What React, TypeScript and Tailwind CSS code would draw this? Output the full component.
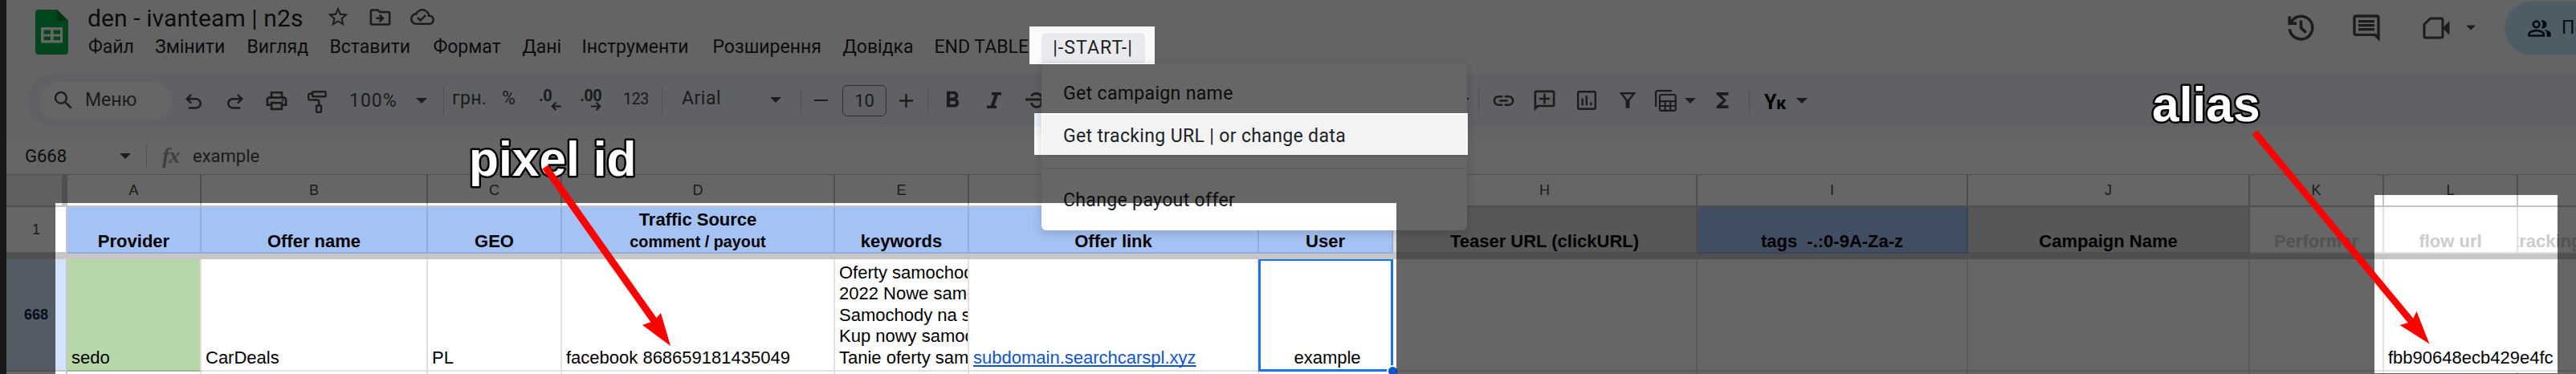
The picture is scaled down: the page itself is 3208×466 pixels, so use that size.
import React from 'react';
import {
    MdFormatBold,
    MdFunctions,
    MdLink,
    MdOutlineAddComment,
    MdOutlineCloudDone,
    MdOutlineComment,
    MdOutlineDriveFileMove,
    MdOutlinePeopleAlt,
    MdOutlinePrint,
    MdSearch,
    MdStarBorder,
} from 'react-icons/md';

interface Column {
    letter: string;
    width: string;
    title: React.ReactNode;
    head: string;
    cell?: React.ReactNode;
    cellClass?: string;
}

const BLUE = 'bg-[#a4c2f4] border-[#92abd8] text-black';
const GREY = 'bg-[#d9d9d9] border-[#c2c2c2] text-black';
const PLAIN = 'bg-white border-[#e1e1e1] text-[#cccccc]';

const keywords = [
    'Oferty samochodowe',
    '2022 Nowe samochody',
    'Samochody na sprzedaż',
    'Kup nowy samochód',
    'Tanie oferty samochodowe',
];

const columns: Column[] = [
    { letter: 'A', width: 'w-[167px]', title: 'Provider', head: BLUE, cell: 'sedo', cellClass: 'bg-[#b6d7a8] border-r-[#e1e1e1] border-b-[#9fbd93]' },
    { letter: 'B', width: 'w-[282px]', title: 'Offer name', head: BLUE, cell: 'CarDeals' },
    { letter: 'C', width: 'w-[167px]', title: 'GEO', head: BLUE, cell: 'PL' },
    {
        letter: 'D',
        width: 'w-[340px]',
        title: <>Traffic Source<br /><span className="text-[19.8px]">comment / payout</span></>,
        head: BLUE,
        cell: 'facebook 868659181435049',
    },
    {
        letter: 'E',
        width: 'w-[167px]',
        title: 'keywords',
        head: BLUE,
        cell: <div className="w-[162px] overflow-hidden">{keywords.map(k => <div key={k}>{k}</div>)}</div>,
    },
    {
        letter: 'F',
        width: 'w-[361px]',
        title: 'Offer link',
        head: BLUE,
        cell: <span className="text-[#1155cc] underline decoration-2 underline-offset-[2px] [text-decoration-skip-ink:none]">subdomain.searchcarspl.xyz</span>,
    },
    { letter: 'G', width: 'w-[167px]', title: 'User', head: BLUE, cell: 'example', cellClass: 'justify-center' },
    { letter: 'H', width: 'w-[379px]', title: 'Teaser URL (clickURL)', head: GREY },
    { letter: 'I', width: 'w-[337px]', title: 'tags  -.:0-9A-Za-z', head: BLUE },
    { letter: 'J', width: 'w-[351px]', title: 'Campaign Name', head: GREY },
    { letter: 'K', width: 'w-[167px]', title: 'Performer', head: PLAIN },
    { letter: 'L', width: 'w-[167px]', title: 'flow url', head: PLAIN, cell: 'fbb90648ecb429e4fc', cellClass: 'border-r-transparent' },
    { letter: 'M', width: 'w-[184px]', title: 'tracking campaign', head: PLAIN },
];

const menuItems = [
    { label: 'Файл', width: 'w-[83px]' },
    { label: 'Змінити', width: 'w-[114.5px]' },
    { label: 'Вигляд', width: 'w-[103px]' },
    { label: 'Вставити', width: 'w-[129px]' },
    { label: 'Формат', width: 'w-[111px]' },
    { label: 'Дані', width: 'w-[74px]' },
    { label: 'Інструменти', width: 'w-[163px]' },
    { label: 'Розширення', width: 'w-[162px]' },
    { label: 'Довідка', width: 'w-[114px]' },
    { label: 'END TABLE', width: 'w-[133px]' },
];

const SheetsLogo: React.FC = () => (
    <svg width="41" height="56" viewBox="0 0 41 56" className="shrink-0">
        <path d="M4 0h23l14 14v38a4 4 0 0 1-4 4H4a4 4 0 0 1-4-4V4a4 4 0 0 1 4-4z" fill="#00ac47" />
        <path d="M27 0l14 14H27z" fill="#00832d" />
        <path fillRule="evenodd" fill="#fff" d="M7 22h27v19.500H7zM10.500 25.500v5h8.500v-5zM22.500 25.500v5H31v-5zM10.500 33.500v4.500h8.500v-4.500zM22.500 33.500v4.500H31v-4.500z" />
    </svg>
);

const UndoIcon: React.FC<{ className?: string }> = ({ className }) => (
    <svg width="30" height="30" viewBox="0 0 24 24" fill="currentColor" className={className}>
        <path d="M7 19v-2h7.100c1.050 0 1.960-.33 2.740-1 .78-.67 1.160-1.500 1.160-2.500s-.39-1.830-1.160-2.500C16.060 10.330 15.150 10 14.100 10H7.800l2.600 2.600L9 14 4 9l5-5 1.400 1.400L7.800 8h6.300c1.620 0 3 .53 4.160 1.580C19.420 10.630 20 11.930 20 13.500s-.58 2.880-1.740 3.930C17.100 18.480 15.720 19 14.100 19H7Z" />
    </svg>
);

const PaintIcon: React.FC = () => (
    <svg width="24" height="28" viewBox="0 0 24 28" fill="none" stroke="currentColor" strokeWidth="2.4">
        <rect x="6.200" y="1.200" width="16.500" height="6" rx="1" />
        <path d="M6 3.800H3.200a2 2 0 0 0-2 2v3.700a2 2 0 0 0 2 2h9a2 2 0 0 1 2 2v4.500" />
        <rect x="11" y="18.500" width="6" height="8.300" rx="1" />
    </svg>
);

const ItalicIcon: React.FC = () => (
    <svg width="18" height="20" viewBox="0 0 18 20" fill="currentColor">
        <path d="M6 0h12v3.500h-4.200L9.300 16.500H12V20H0v-3.500h4.800L9.400 3.500H6z" />
    </svg>
);

const StrikeIcon: React.FC = () => (
    <svg width="27" height="20" viewBox="0 0 27 20" fill="none" stroke="currentColor" strokeWidth="2.800">
        <path d="M0 9h27M20 6c-1-3-3.500-4.500-6.500-4.500S8 3 7.800 5M7.500 13c.5 3 3 5.300 6.300 5.300 3.700 0 6.200-2 6.200-4.800 0-1-.3-1.800-.8-2.500" />
    </svg>
);

const ChartIcon: React.FC = () => (
    <svg width="24" height="24" viewBox="0 0 24 24" fill="none" stroke="currentColor" strokeWidth="2.400">
        <rect x="1.200" y="1.200" width="21.600" height="21.600" rx="1.500" />
        <path d="M6.700 18.300V9.500M11.800 18.300V6M17.300 18.300V14.500" />
    </svg>
);

const FilterIcon: React.FC = () => (
    <svg width="20" height="20" viewBox="0 0 20 20" fill="none" stroke="currentColor" strokeWidth="2.400">
        <path d="M2 1.300h16L11.200 10v8.500H8.800V10z" />
    </svg>
);

const TableViewIcon: React.FC = () => (
    <svg width="27" height="27" viewBox="0 0 27 27" fill="none" stroke="currentColor" strokeWidth="2.200">
        <path d="M1.100 21V3.500a2.400 2.400 0 0 1 2.400-2.400H21" />
        <rect x="6" y="6" width="19.800" height="19.800" rx="2" />
        <path d="M6 14.200h19.800M6 20h19.800M12.600 14v12M19.200 14v12" />
    </svg>
);

const HistoryIcon: React.FC = () => (
    <svg width="43" height="43" viewBox="0 0 24 24" fill="currentColor">
        <path d="M12 21q-3.450 0-6.013-2.288T3.050 13H5.100q.35 2.600 2.313 4.300T12 19q2.925 0 4.963-2.037T19 12t-2.037-4.962T12 5q-1.725 0-3.225.8T6.250 8H9v2H3V4h2v2.350q1.275-1.600 3.113-2.475T12 3q1.875 0 3.513.713t2.850 1.924 1.925 2.850T21 12t-.712 3.513-1.925 2.850-2.850 1.925T12 21m2.800-4.800L11 12.400V7h2v4.600l3.200 3.200z" />
    </svg>
);

const CameraIcon: React.FC = () => (
    <svg width="34" height="28" viewBox="0 0 34 28" fill="none" stroke="currentColor" strokeWidth="3">
        <path d="M9.500 2H23a2 2 0 0 1 2 2v20a2 2 0 0 1-2 2H4a2 2 0 0 1-2-2V9.500z" />
        <path d="M25 14l8.500-9v18z" fill="currentColor" stroke="none" />
    </svg>
);

const Caret: React.FC<{ className?: string }> = ({ className = '' }) => (
    <svg width="14" height="7" viewBox="0 0 14 7" fill="currentColor" className={`shrink-0 ${className}`}>
        <path d="M0 0h14L7 7z" />
    </svg>
);

const Divider: React.FC<{ className?: string }> = ({ className = '' }) => (
    <div className={`w-px h-[33px] shrink-0 bg-[#c7c7c7] ${className}`} />
);

const Slot: React.FC<{ className: string; children?: React.ReactNode }> = ({ className, children }) => (
    <div className={`flex shrink-0 items-center justify-center ${className}`}>{children}</div>
);

const DecimalButton: React.FC<{ text: string; increase?: boolean }> = ({ text, increase }) => (
    <svg width="30" height="28" viewBox="0 0 30 28" className="overflow-visible">
        <text x="-1" y="15" fontFamily="Roboto" fontWeight="700" fontSize="20" letterSpacing="-0.500" fill="currentColor">{text}</text>
        <path
            d={increase ? 'M13 21.500h11M19.500 16.800l4.700 4.700-4.700 4.700' : 'M27 21.500H16M20.500 16.800l-4.700 4.700 4.700 4.700'}
            fill="none"
            stroke="currentColor"
            strokeWidth="2.200"
        />
    </svg>
);

const TitleBar: React.FC = () => (
    <div className="flex h-[79px]">
        <div className="w-[101px] shrink-0 pl-9 pt-3">
            <SheetsLogo />
        </div>
        <div className="flex w-[2707px] shrink-0 flex-col">
            <div className="flex h-[39px] items-center pt-[7px] text-[#444746]">
                <span className="w-[297px] whitespace-nowrap text-[30px] leading-8 tracking-[0.1px] text-[#1f1f1f]">den - ivanteam | n2s</span>
                <MdStarBorder size={30} className="-mt-1" />
                <MdOutlineDriveFileMove size={31} className="-mt-1 ml-[22px]" />
                <MdOutlineCloudDone size={30} className="-mt-1 ml-[22px]" />
            </div>
            <div className="flex h-10 items-center whitespace-nowrap pl-px text-[23px] text-[#1f1f1f]">
                {menuItems.map(item => (
                    <span key={item.label} className={`shrink-0 ${item.width}`}>{item.label}</span>
                ))}
                <span className="mt-[2px] flex h-[38px] w-[129px] shrink-0 items-center justify-center rounded-t-md bg-[#e8eaed] tracking-[1.1px]">|-START-|</span>
            </div>
        </div>
        <div className="flex h-[69px] items-center text-[#444746]">
            <Slot className="w-[99px]"><HistoryIcon /></Slot>
            <Slot className="w-[63px]"><MdOutlineComment size={40} /></Slot>
            <Slot className="ml-[24px] w-[63px]"><CameraIcon /></Slot>
            <Caret className="ml-[6px] w-[12px]" />
            <div className="ml-[36px] mt-px flex h-[66px] w-[260px] shrink-0 items-center rounded-full bg-[#c2e7ff] pl-[28px] text-[#001d35]">
                <MdOutlinePeopleAlt size={31} />
                <span className="ml-[12px] text-[23px] tracking-[0.3px]">Поділитися</span>
            </div>
        </div>
    </div>
);

const Toolbar: React.FC = () => (
    <div className="ml-[26px] mt-[13px] flex h-[66px] items-center whitespace-nowrap rounded-l-full bg-[#edf2fa] text-[23px] text-[#444746]">
        <div className="ml-[15px] flex h-[47px] w-[165px] shrink-0 items-center rounded-full bg-white pl-[15px]">
            <MdSearch size={30} />
            <span className="ml-[12px]">Меню</span>
        </div>
        <Slot className="w-[54px] pt-1"><UndoIcon /></Slot>
        <Slot className="w-[50px] pt-1"><UndoIcon className="-scale-x-100" /></Slot>
        <Slot className="w-[52px]"><MdOutlinePrint size={31} /></Slot>
        <Slot className="w-[50px] pt-1"><PaintIcon /></Slot>
        <span className="ml-[15px] w-[83px] pt-[2px] tracking-[1px]">100%</span>
        <Caret />
        <Divider className="ml-5" />
        <span className="ml-[10px] w-[62px] -mt-1 tracking-[0.3px]">грн.</span>
        <span className="w-[48px] -mt-1">%</span>
        <Slot className="w-[28px]"><DecimalButton text=".0" /></Slot>
        <Slot className="ml-[23px] w-[28px]"><DecimalButton text=".00" increase /></Slot>
        <span className="ml-[24px] w-[48px] -mt-1 text-[20px] tracking-[-0.8px]">123</span>
        <Divider />
        <span className="ml-[24px] w-[110px] -mt-1 tracking-[0.5px]">Arial</span>
        <Caret className="-mt-[1px]" />
        <Divider className="ml-6" />
        <div className="ml-4 h-[2px] w-[17px] shrink-0 bg-[#444746]" />
        <div className="ml-[18px] flex h-[39px] w-[55px] shrink-0 items-center justify-center rounded-md border border-[#747775] text-[22px]">10</div>
        <Slot className="ml-4 w-[17px]">
            <svg width="17" height="17" viewBox="0 0 17 17" stroke="currentColor" strokeWidth="2.400"><path d="M0 8.500h17M8.500 0v17" /></svg>
        </Slot>
        <Divider className="ml-[18px]" />
        <Slot className="ml-[13px] w-[34px]"><MdFormatBold size={34} /></Slot>
        <Slot className="ml-[26px] w-[18px]"><ItalicIcon /></Slot>
        <Slot className="ml-[30px] w-[27px]"><StrikeIcon /></Slot>
        <Caret className="ml-[512px]" />
        <Divider className="ml-[11px]" />
        <Slot className="ml-[14px] w-[33px] pt-px"><MdLink size={31} /></Slot>
        <Slot className="ml-[18px] w-[33px]"><MdOutlineAddComment size={31} className="-scale-x-100" /></Slot>
        <Slot className="ml-[19px] w-[33px]"><ChartIcon /></Slot>
        <Slot className="ml-[25px] w-[20px]"><FilterIcon /></Slot>
        <Slot className="ml-[24px] w-[27px]"><TableViewIcon /></Slot>
        <Caret className="ml-[10px]" />
        <Slot className="ml-[18px] w-[30px]"><MdFunctions size={30} /></Slot>
        <Divider className="ml-[18px]" />
        <span className="ml-[18px] w-[40px] pt-1 text-[25px] font-bold leading-none tracking-[-0.5px] text-black">Y<span className="text-[22px]">к</span></span>
        <Caret />
    </div>
);

const FormulaBar: React.FC = () => (
    <div className="mt-[13px] flex h-[47px] items-center border-b border-[#c0c0c0] bg-white text-[22px] text-[#444746]">
        <span className="ml-[23px] w-[118px] text-[#1f1f1f]">G668</span>
        <Caret />
        <div className="ml-[19px] h-7 w-px bg-[#c7c7c7]" />
        <span className="ml-[19px] w-[38px] font-['Liberation_Serif'] text-[28px] font-bold italic leading-none tracking-[-1px] text-[#9aa0a6]">fx</span>
        <span>example</span>
    </div>
);

const Grid: React.FC = () => (
    <div className="font-['Liberation_Sans',Arial,sans-serif] text-[22px] leading-[26.4px] text-black">
        <div className="flex h-10 text-[18px] text-[#444746]">
            <div className="w-[76px] shrink-0 border-b-2 border-r-[7px] border-[#c6c6c6] bg-[#eff6f3]" />
            {columns.map(col => (
                <div key={col.letter} className={`flex shrink-0 items-center justify-center border-b-2 border-r-2 border-[#c4c4c4] bg-white ${col.width}`}>{col.letter}</div>
            ))}
        </div>
        <div className="flex h-[58px] font-bold">
            <div className="flex w-[76px] shrink-0 items-center justify-center border-b-2 border-r-2 border-[#c6c6c6] bg-white text-[18px] font-normal text-[#444746]">1</div>
            {columns.map(col => (
                <div key={col.letter} className={`flex shrink-0 items-end justify-center overflow-hidden whitespace-pre border-b-2 border-r-2 text-center ${col.width} ${col.head}`}>
                    <div>{col.title}</div>
                </div>
            ))}
        </div>
        <div className="h-[7px] bg-[#c6c6c6]" />
        <div className="flex h-[140px]">
            <div className="flex w-[76px] shrink-0 items-center justify-center border-b-2 border-r-2 border-[#c6c6c6] bg-[#d3e3fd] text-[18px] font-bold text-[#041e49]">668</div>
            {columns.map(col => (
                <div key={col.letter} className={`flex shrink-0 items-end whitespace-nowrap border-b-2 border-r-2 border-[#e1e1e1] pb-[2px] pl-[5px] ${col.width} ${col.cellClass ?? ''}`}>
                    {col.cell}
                </div>
            ))}
        </div>
        <div className="flex h-[3px]">
            <div className="w-[76px] shrink-0 border-r-2 border-[#c6c6c6]" />
            {columns.map(col => (
                <div key={col.letter} className={`shrink-0 border-r-2 border-[#e1e1e1] ${col.width}`} />
            ))}
        </div>
    </div>
);

const DropdownMenu: React.FC = () => (
    <div className="absolute left-[1297px] top-[79px] h-[208px] w-[530px] rounded-md rounded-tl-none bg-white px-px pt-[11px] text-[23px] leading-[53px] tracking-[0.35px] text-[#202124] shadow-[0_3px_10px_2px_rgba(60,64,67,0.18)]">
        <div className="h-[53px] pl-[26px]">Get campaign name</div>
        <div className="h-[53px] bg-[#f1f3f4] pl-[26px]">Get tracking URL | or change data</div>
        <div className="mt-[13px] h-px bg-[#dadce0]" />
        <div className="mt-[13px] h-[53px] pl-[26px]">Change payout offer</div>
    </div>
);

// Outline of the selected cell G668 with its fill handle
const CellSelection: React.FC = () => (
    <>
        <div className="absolute left-[1567px] top-[323px] h-[140px] w-[168px] border-b-[3px] border-l-[3px] border-r-[3px] border-t-[2px] border-[#1a73e8]" />
        <div className="absolute left-[1727px] top-[455px] size-[15px] rounded-full border-2 border-white bg-[#0b57d0]" />
    </>
);

const Annotations: React.FC = () => (
    <svg width="3208" height="466" viewBox="0 0 3208 466" className="absolute left-0 top-0">
        <path
            fillRule="evenodd"
            fill="#000"
            fillOpacity="0.600"
            d="M0 0h3208v466H0zM1282 33v47h156V33zM1288 141v52h540v-52zM69 253v213h1670V253zM2957 243v222h228V243z"
        />
        <g fontFamily="Liberation Sans, Arial, sans-serif" fontWeight="700" fontSize="60.500" fill="#fff" stroke="#000" strokeWidth="5" strokeLinejoin="round" paintOrder="stroke">
            <text x="584" y="219">pixel id</text>
            <text x="2680" y="151">alias</text>
        </g>
        <g fill="#f00" stroke="#f00">
            <path d="M679 208L817 403" strokeWidth="9" />
            <path d="M835 431L823 390L814 400L800 405z" stroke="none" />
            <path d="M2808 165L3005 403" strokeWidth="8.500" />
            <path d="M3025.500 428.500L3009.500 388L3003 401L2988.500 405z" stroke="none" />
        </g>
    </svg>
);

const App: React.FC = () => {
    return (
        <div className="relative h-[466px] w-[3208px] overflow-hidden bg-white font-[Roboto,sans-serif]">
            <div className="flex">
                <div className="h-[466px] w-2 shrink-0 bg-[#3f3f3f]" />
                <div className="w-[3200px] shrink-0 overflow-hidden">
                    <div className="bg-[#f9fbfd]">
                        <TitleBar />
                        <Toolbar />
                        <div className="h-[13px]" />
                    </div>
                    <div className="-mt-[13px]">
                        <FormulaBar />
                    </div>
                    <Grid />
                </div>
            </div>
            <CellSelection />
            <DropdownMenu />
            <Annotations />
        </div>
    );
};

export default App;
